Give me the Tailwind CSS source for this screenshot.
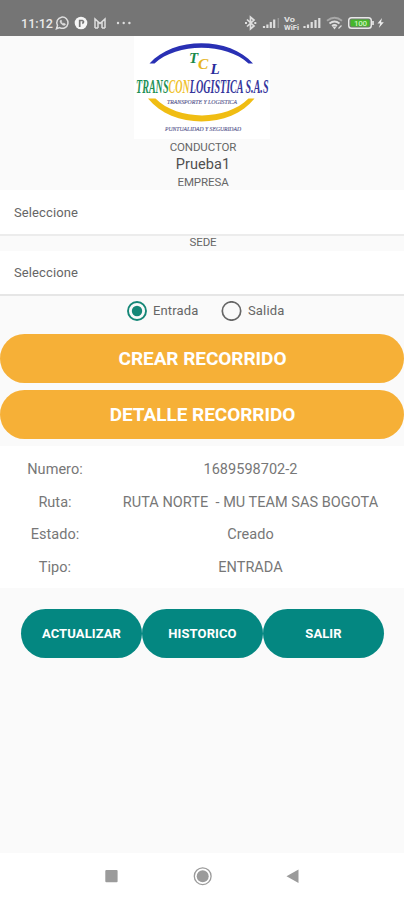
<!DOCTYPE html>
<html lang="es">
<head>
<meta charset="utf-8">
<title>Transconlogistica</title>
<script src="https://cdn.jsdelivr.net/npm/@tailwindcss/browser@4"></script>
</head>
<body class="bg-white">
<div class="w-[404px] h-[900px] flex flex-col overflow-hidden bg-[#fafafa] font-[Roboto,sans-serif] text-[#666]">
  <header class="h-[36px] shrink-0 bg-[#757575] text-[#e8e8e8]">
    <svg class="block" width="404" height="36" viewBox="0 0 404 36" fill="none" stroke="#dedede">
      <text x="21" y="28" font-size="13.500" font-weight="500" fill="#e8e8e8" stroke="none" textLength="32" lengthAdjust="spacingAndGlyphs">11:12</text>
      <path d="M56.500 28.700l1-3.300a5.600 5.600 0 1 1 2.200 2.200z" stroke-width="1.500"/>
      <path d="M60.200 20.700c-.8 2 2.700 5.600 5 4.400l.2-1.200-1.600-.8-.8.6-1.700-1.800.5-.7-.7-1.200z" fill="#dedede" stroke="#dedede" stroke-width=".5"/>
      <circle cx="81" cy="23" r="6.300" fill="#f5f5f5" stroke="none"/>
      <path d="M79.700 27v-6.500h2.600q2.500 1.200 0 3" stroke="#757575" stroke-width="1.700"/>
      <path d="M95 28v-9l5 4.500 5-4.500v9M98 28v-6M102 28v-6M95 28h3M102 28h3" stroke-width="1.500"/>
      <g fill="#dedede" stroke="none"><circle cx="118" cy="23" r="1.200"/><circle cx="123.700" cy="23" r="1.200"/><circle cx="129.400" cy="23" r="1.200"/></g>
      <path d="M247 19.500l7 6.500-3.500 3V17l3.500 3-7 6.500" stroke-width="1.700"/>
      <path d="M245 23h2M254.300 23h2" stroke-width="2"/>
      <g stroke-width="2.200"><path d="M264 28v-2M267.400 28v-3.500M270.800 28v-6M274.200 28v-8.500"/><path d="M278.300 28V18" stroke="#979797" stroke-width="1.500"/>
      <path d="M304.500 28v-2M308 28v-3.500M311.700 28v-6M315.500 28v-8M319.300 28V18"/></g>
      <g fill="#e3e3e3" stroke="none" font-weight="700"><text x="284" y="22.300" font-size="8" textLength="11" lengthAdjust="spacingAndGlyphs">Vo</text><text x="284" y="30" font-size="8" textLength="15" lengthAdjust="spacingAndGlyphs">WiFi</text></g>
      <path d="M327 20.800q7.500-6 15 0" stroke="#a8a8a8" stroke-width="1.800"/><path d="M329.500 23.500q5-4 10 0M332 26q2.500-2 5 0" stroke-width="1.800"/>
      <path d="M333.500 27h2l-1 1.500zM338.500 28.500l3-3" stroke-width="1.200"/>
      <rect x="348.700" y="17.700" width="22.600" height="10.600" rx="2.800" stroke="#e8e8e8" stroke-width="1.400"/>
      <rect x="350.500" y="19.500" width="19" height="7" rx="1" fill="#45b62b" stroke="none"/>
      <path d="M373 21v4" stroke-width="1.800"/>
      <text x="354" y="26" font-size="8" font-weight="500" fill="#c9f0bd" stroke="none" textLength="13">100</text>
      <path d="M382 18l-4.500 5.500h2.800L378.800 28l5-5.800H381z" fill="#eee" stroke="none"/>
    </svg>
  </header>

  <div class="h-[103px] shrink-0 flex justify-center">
    <svg class="block bg-white" width="136" height="103" viewBox="134 36 136 103" font-family="'Liberation Serif',serif" font-style="italic">
      <path d="M149.500 63.500C173 36.500 230 36.500 253 63.500L248.500 63.500C226 42.500 177 42.500 154.500 63.500Z" fill="#2930b4"/>
      <path d="M148 98.500C172 129 231 129 254.500 98.500L248.500 98.500C226 121 178 121 155.500 98.500Z" fill="#f0bd13"/>
      <g font-weight="700">
        <text x="189" y="62.500" font-size="15" fill="#188a4a">T</text>
        <text x="198" y="68.500" font-size="15.500" fill="#e6b51c">C</text>
        <text x="210.500" y="74" font-size="15" fill="#282b9b">L</text>
      </g>
      <text x="136" y="93" font-size="18.500" font-weight="700" textLength="132.500" lengthAdjust="spacingAndGlyphs"><tspan fill="#1d9156">TRANS</tspan><tspan fill="#f0c22c">CON</tspan><tspan fill="#35359c">LOGISTICA S.A.S</tspan></text>
      <g font-size="6" fill="#5c5c91" stroke="#5c5c91" stroke-width=".15">
        <text x="167" y="104" textLength="70" lengthAdjust="spacingAndGlyphs">TRANSPORTE Y LOGISTICA</text>
        <text x="165" y="130.500" textLength="76" lengthAdjust="spacingAndGlyphs">PUNTUALIDAD Y SEGURIDAD</text>
      </g>
    </svg>
  </div>

  <div class="h-[51px] shrink-0 flex flex-col items-center pl-[2px]">
    <div class="h-[16px] leading-[16px] text-[11.5px] tracking-[-0.1px]">CONDUCTOR</div>
    <div class="h-[20px] leading-[20px] text-[14.5px] text-[#505050] tracking-[0.1px]">Prueba1</div>
    <div class="h-[15px] leading-[15px] text-[11.5px] tracking-[-0.1px]">EMPRESA</div>
  </div>
  <div class="h-[44px] shrink-0 bg-white pl-[14px] leading-[45px] text-[13px] tracking-[0.1px]">Seleccione</div>
  <div class="h-[17px] shrink-0 border-t-2 border-[#ececec] leading-[13px] text-[11.5px] tracking-[-0.1px] text-center pl-[2px]">SEDE</div>
  <div class="h-[45px] shrink-0 bg-white border-b-2 border-[#e6e6e6] pl-[14px] leading-[43px] text-[13px] tracking-[0.1px]">Seleccione</div>

  <div class="h-[38px] shrink-0 flex pl-[127px] pt-[5px] text-[13px] leading-[20px]">
    <svg width="20" height="20" viewBox="0 0 20 20"><circle cx="10" cy="10" r="9" fill="none" stroke="#158777" stroke-width="1.900"/><circle cx="10" cy="10" r="5.200" fill="#158777"/></svg>
    <span class="ml-[6px] w-[68px] tracking-[0.15px]">Entrada</span>
    <svg width="21" height="20" viewBox="0 0 21 20"><circle cx="10.500" cy="10" r="9.200" fill="none" stroke="#666" stroke-width="1.700"/></svg>
    <span class="ml-[6px] tracking-[0.15px]">Salida</span>
  </div>

  <div class="shrink-0 flex flex-col gap-[7px] text-white font-bold text-[19px] tracking-[-0.05px] text-center">
    <div class="h-[49px] rounded-full bg-[#f6b037] leading-[50px] pl-[1px]">CREAR RECORRIDO</div>
    <div class="h-[49px] rounded-full bg-[#f6b037] leading-[50px] pl-[1px]">DETALLE RECORRIDO</div>
  </div>

  <div class="mt-[7px] h-[142px] shrink-0 bg-white pt-[7px] grid grid-cols-[110px_281px] auto-rows-[32.700px] text-center text-[14.5px] leading-[33px] tracking-[0.03px] text-[#777] whitespace-pre">
    <div>Numero:</div><div>1689598702-2</div>
    <div>Ruta:</div><div>RUTA NORTE  - MU TEAM SAS BOGOTA</div>
    <div>Estado:</div><div>Creado</div>
    <div>Tipo:</div><div>ENTRADA</div>
  </div>

  <div class="mt-[21px] shrink-0 pl-[21px] flex text-white font-bold text-[13px] tracking-[0.1px] text-center leading-[50px]">
    <div class="w-[121px] shrink-0 h-[49px] rounded-full bg-[#048781]">ACTUALIZAR</div>
    <div class="w-[121px] shrink-0 h-[49px] rounded-full bg-[#048781]">HISTORICO</div>
    <div class="w-[121px] shrink-0 h-[49px] rounded-full bg-[#048781]">SALIR</div>
  </div>

  <nav class="mt-auto h-[47px] shrink-0 bg-white">
    <svg class="block" width="404" height="47" viewBox="0 853 404 47" fill="#9b9b9b"><rect x="105.300" y="870" width="12.300" height="12.300" rx="1"/><circle cx="202.700" cy="876.200" r="8.400" fill="none" stroke="#9b9b9b" stroke-width="1.300"/><circle cx="202.700" cy="876.200" r="6"/><path d="M286.500 876.200l12-6.700v13.400z"/></svg>
  </nav>
</div>
</body>
</html>
